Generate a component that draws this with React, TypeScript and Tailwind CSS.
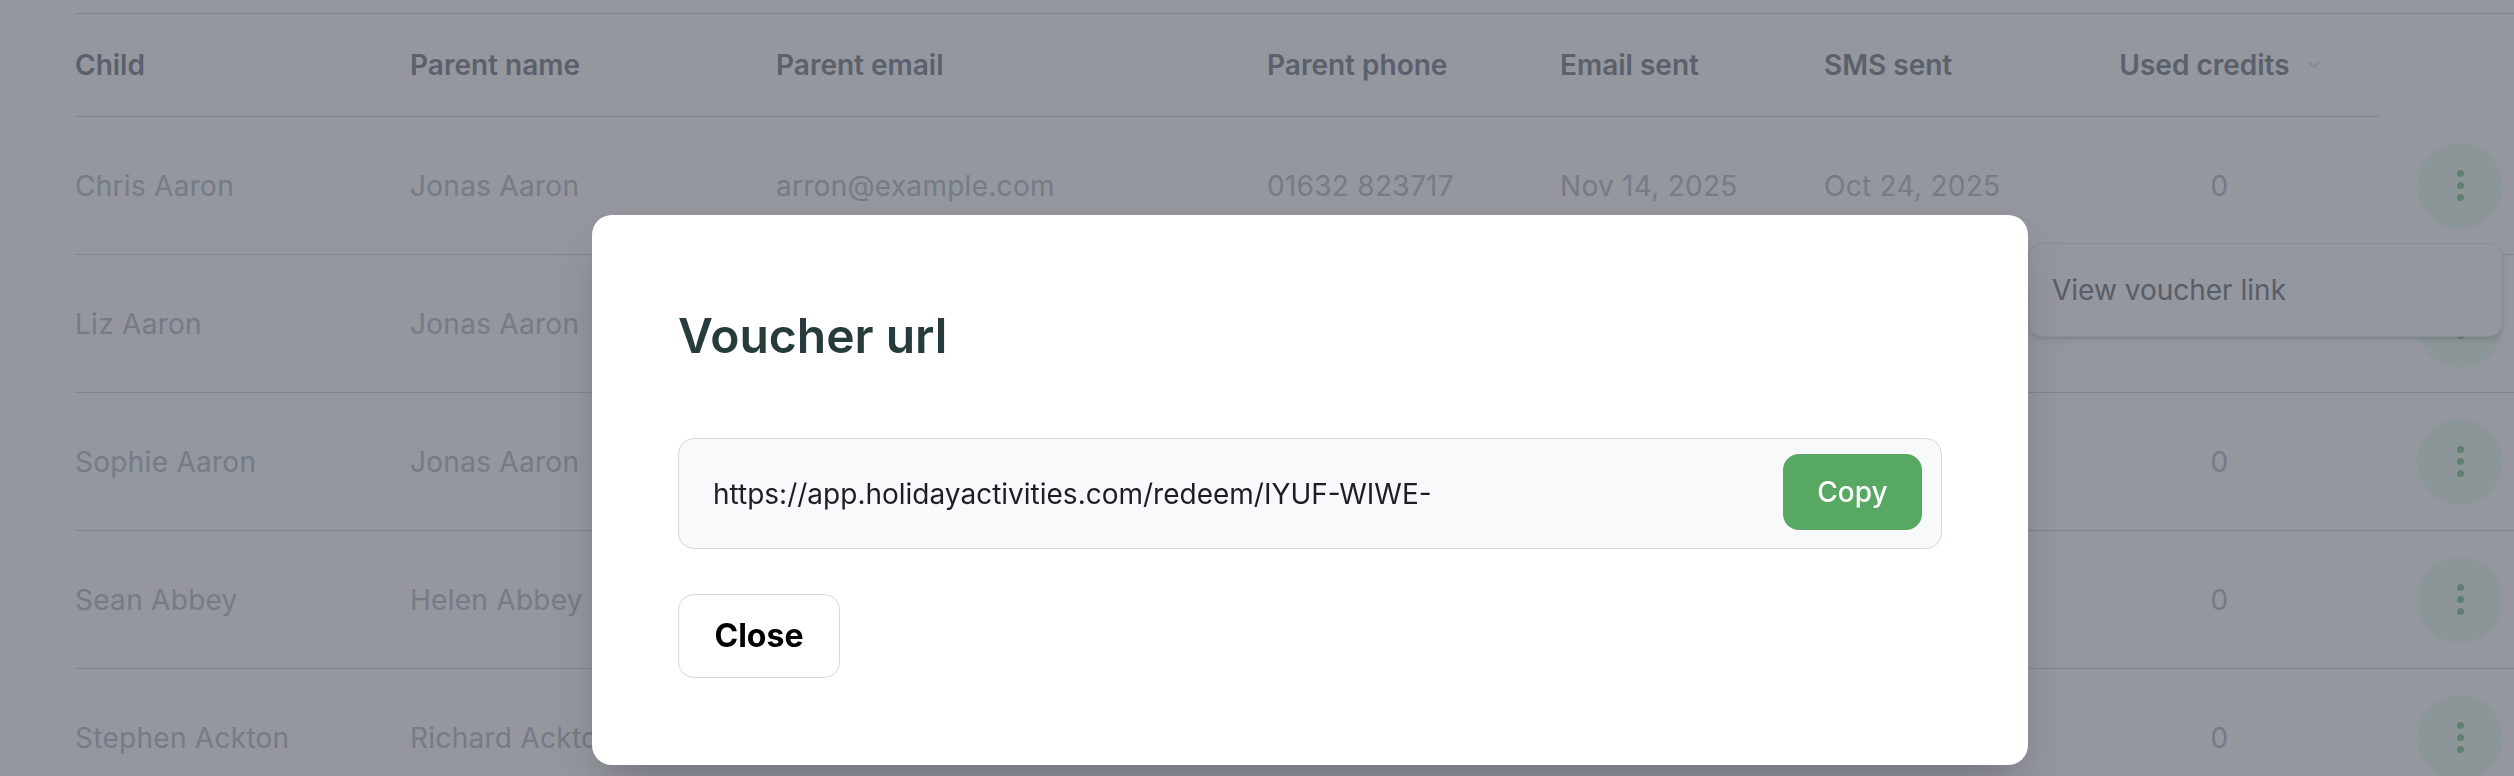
import React from "react";

type Row = {
  child: string;
  parent: string;
  email: string;
  phone: string;
  emailSent: string;
  smsSent: string;
  credits: number;
};

const rows: Row[] = [
  { child: "Chris Aaron", parent: "Jonas Aaron", email: "arron@example.com", phone: "01632 823717", emailSent: "Nov 14, 2025", smsSent: "Oct 24, 2025", credits: 0 },
  { child: "Liz Aaron", parent: "Jonas Aaron", email: "arron@example.com", phone: "01632 823717", emailSent: "Nov 14, 2025", smsSent: "Oct 24, 2025", credits: 0 },
  { child: "Sophie Aaron", parent: "Jonas Aaron", email: "arron@example.com", phone: "01632 823717", emailSent: "Nov 14, 2025", smsSent: "Oct 24, 2025", credits: 0 },
  { child: "Sean Abbey", parent: "Helen Abbey", email: "abbey@example.com", phone: "01632 960112", emailSent: "Nov 14, 2025", smsSent: "Oct 24, 2025", credits: 0 },
  { child: "Stephen Ackton", parent: "Richard Ackton", email: "ackton@example.com", phone: "01632 960455", emailSent: "Nov 14, 2025", smsSent: "Oct 24, 2025", credits: 0 },
];

const cols = "grid grid-cols-[335px_366px_491px_293px_264px_236px_319px_1fr]";

const KebabButton: React.FC = () => (
  <div className="ml-[38px] flex h-[86px] w-[86px] flex-col items-center justify-center gap-[5px] rounded-full bg-[#f0fbf2]">
    <span className="h-[7px] w-[7px] rounded-full bg-[#9fd5ac]" />
    <span className="h-[7px] w-[7px] rounded-full bg-[#9fd5ac]" />
    <span className="h-[7px] w-[7px] rounded-full bg-[#9fd5ac]" />
  </div>
);

const VoucherTable: React.FC = () => {
  const head = "flex h-[103px] items-center border-b border-[#dbdee4] font-semibold text-[#969ba4]";
  return (
    <div className="w-[2600px] border-t border-[#dbdee4]">
      <div className={cols}>
        <div className={head}>Child</div>
        <div className={head}>Parent name</div>
        <div className={head}>Parent email</div>
        <div className={head}>Parent phone</div>
        <div className={head}>Email sent</div>
        <div className={head}>SMS sent</div>
        <div className={`${head} justify-center gap-[18px]`}>
          <span>Used credits</span>
          <svg width="12" height="8" viewBox="0 0 12 8" fill="none">
            <path d="M1.5 1.5 6 6l4.5-4.5" stroke="#dbdde2" strokeWidth="1.6" strokeLinecap="round" strokeLinejoin="round" />
          </svg>
        </div>
        <div className="h-[103px]" />
      </div>

      {rows.map((r) => (
        <div key={r.child} className={`${cols} h-[138px] items-center border-b border-[#dbdee4] tracking-[0.01em] text-[#c6ccd5]`}>
          <div>{r.child}</div>
          <div>{r.parent}</div>
          <div>{r.email}</div>
          <div>{r.phone}</div>
          <div>{r.emailSent}</div>
          <div>{r.smsSent}</div>
          <div className="text-center">{r.credits}</div>
          <div>
            <KebabButton />
          </div>
        </div>
      ))}
    </div>
  );
};

const VoucherModal: React.FC = () => (
  <div className="w-[1436px] rounded-[20px] bg-white px-[86px] pb-[87px] pt-[92px] shadow-2xl">
    <h2 className="text-[48px] font-semibold leading-[58px] text-[#283b3b]">Voucher url</h2>

    <div className="mt-[73px] flex h-[111px] items-center justify-between rounded-[16px] border border-[#d5d8de] bg-[#f8f9fb] pl-[34px] pr-[19px]">
      <span className="text-[28px] text-[#1b1f24]">https://app.holidayactivities.com/redeem/IYUF-WIWE-</span>
      <button className="-mt-[4px] flex h-[76px] w-[139px] items-center justify-center rounded-[16px] bg-[#56a862] text-[28px] font-medium text-white">
        Copy
      </button>
    </div>

    <button className="mt-[45px] flex h-[84px] w-[162px] items-center justify-center rounded-[16px] border border-[#d8d8dc] bg-white text-[32px] font-bold text-black">
      Close
    </button>
  </div>
);

export default function App() {
  return (
    <div className="relative h-screen w-full overflow-hidden bg-white font-['Inter','Liberation_Sans',sans-serif] text-[28px]">
      <div className="pl-[75px] pt-[13px]">
        <VoucherTable />
      </div>

      {/* row menu left open behind the dialog */}
      <div className="absolute left-[2028px] top-[243px] flex h-[94px] w-[475px] items-center rounded-[14px] border border-[#eceef1] bg-white pl-[23px] text-[#92959b] shadow-md">
        View voucher link
      </div>

      <div className="fixed inset-0 bg-[#111827]/45 pl-[592px] pt-[215px]">
        <VoucherModal />
      </div>
    </div>
  );
}
